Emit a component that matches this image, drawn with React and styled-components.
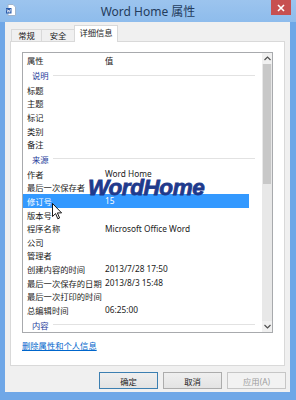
import React from "react";
import styled, { createGlobalStyle } from "styled-components";

const GlobalStyle = createGlobalStyle`
  html, body {
    margin: 0;
    padding: 0;
  }
  body {
    width: 296px;
    height: 400px;
    overflow: hidden;
    font-family: "Noto Sans", "Noto Sans CJK SC", sans-serif;
    color: #1b1b1b;
  }
`;

const rows = [
  { group: "说明" },
  { name: "标题" },
  { name: "主题" },
  { name: "标记" },
  { name: "类别" },
  { name: "备注" },
  { group: "来源" },
  { name: "作者", value: "Word Home" },
  { name: "最后一次保存者" },
  { name: "修订号", value: "15", selected: true },
  { name: "版本号" },
  { name: "程序名称", value: "Microsoft Office Word" },
  { name: "公司" },
  { name: "管理者" },
  { name: "创建内容的时间", value: "2013/7/28 17:50" },
  { name: "最后一次保存的日期", value: "2013/8/3 15:48" },
  { name: "最后一次打印的时间" },
  { name: "总编辑时间", value: "06:25:00" },
  { group: "内容" },
];

const tabs = [
  { label: "常规", width: 31 },
  { label: "安全", width: 34 },
  { label: "详细信息", width: 44, active: true },
];

const App = () => {
  return (
    <>
      <GlobalStyle />
      <Frame>
        <TitleBar>
          <TitleIcon width="10" height="12" viewBox="0 0 10 12">
            <path d="M2 0.5 H7 L9.5 3 V11.5 H2 Z" fill="#fff" stroke="#9fb4cc" />
            <rect x="0" y="4" width="5.5" height="5.5" fill="#2b5cab" />
            <path d="M1 5.2 L1.8 8.4 L2.75 6 L3.7 8.4 L4.5 5.2" fill="none" stroke="#fff" strokeWidth="0.7" />
          </TitleIcon>
          <Title>Word Home 属性</Title>
          <CloseButton>
            <svg width="8" height="8" viewBox="0 0 8 8">
              <path d="M1 1 L7 7 M7 1 L1 7" stroke="#fff" strokeWidth="1.6" />
            </svg>
          </CloseButton>
        </TitleBar>

        <Client>
          <TabStrip>
            {tabs.map((t) => (
              <Tab key={t.label} $active={t.active} $width={t.width}>
                {t.label}
              </Tab>
            ))}
          </TabStrip>

          <Panel>
            <ListBox>
              <ListContent>
                <HeaderRow>
                  <NameCell>属性</NameCell>
                  <ValueCell>值</ValueCell>
                </HeaderRow>
                {rows.map((r, i) =>
                  r.group ? (
                    <GroupRow key={i}>
                      <GroupLabel>{r.group}</GroupLabel>
                      <GroupLine />
                    </GroupRow>
                  ) : (
                    <Row key={i} $selected={r.selected}>
                      <NameCell>{r.name}</NameCell>
                      <ValueCell>{r.value || ""}</ValueCell>
                    </Row>
                  ),
                )}
              </ListContent>
              <ScrollBar>
                <ScrollArrow>
                  <svg width="7" height="5" viewBox="0 0 7 5">
                    <path d="M0.5 4 L3.5 1 L6.5 4" fill="none" stroke="#505050" strokeWidth="1.2" />
                  </svg>
                </ScrollArrow>
                <ScrollTrack>
                  <ScrollThumb />
                </ScrollTrack>
                <ScrollArrow>
                  <svg width="7" height="5" viewBox="0 0 7 5">
                    <path d="M0.5 1 L3.5 4 L6.5 1" fill="none" stroke="#505050" strokeWidth="1.2" />
                  </svg>
                </ScrollArrow>
              </ScrollBar>
            </ListBox>
            <RemoveLink>删除属性和个人信息</RemoveLink>
          </Panel>

          <ButtonRow>
            <DialogButton $default>确定</DialogButton>
            <DialogButton>取消</DialogButton>
            <DialogButton disabled>应用(A)</DialogButton>
          </ButtonRow>
        </Client>

        <Watermark>WordHome</Watermark>
        <Cursor width="11" height="17" viewBox="0 0 11 17">
          <path
            d="M0.5 0.5 L0.5 13.5 L3.6 10.6 L5.8 15.8 L7.6 15 L5.4 9.9 L9.6 9.9 Z"
            fill="#fff"
            stroke="#000"
            strokeWidth="0.9"
            strokeLinejoin="round"
          />
        </Cursor>
      </Frame>
    </>
  );
};

const Frame = styled.div`
  position: relative;
  width: 296px;
  height: 400px;
  box-sizing: border-box;
  background: #6fa7e7;
  display: flex;
  flex-direction: column;
  padding-bottom: 8px;
`;

const TitleBar = styled.div`
  height: 22px;
  display: grid;
  grid-template-columns: 25px 1fr 25px;
  align-items: center;
  background: linear-gradient(#9cc4ee, #8ebcec);
`;

const TitleIcon = styled.svg`
  margin-left: 6px;
  margin-top: -2px;
`;

const Title = styled.div`
  text-align: center;
  font-size: 12px;
  color: #243c5c;
  margin-top: -1px;
`;

const CloseButton = styled.div`
  align-self: start;
  width: 20px;
  height: 15px;
  background: #c75050;
  display: flex;
  align-items: center;
  justify-content: center;
`;

const Client = styled.div`
  flex: 1;
  margin: 0 6px 0 5px;
  background: #f0f0f0;
  display: flex;
  flex-direction: column;
  padding: 3px 5px 0 5px;
`;

const TabStrip = styled.div`
  display: flex;
  align-items: flex-end;
  height: 17px;
  padding-left: 2px;
  margin-bottom: -1px;
  position: relative;
  z-index: 1;
`;

const Tab = styled.div`
  box-sizing: border-box;
  width: ${(p) => p.$width}px;
  height: ${(p) => (p.$active ? 17 : 13)}px;
  margin-left: -1px;
  border: 1px solid #d9d9d9;
  border-bottom: ${(p) => (p.$active ? "none" : "1px solid #d9d9d9")};
  background: ${(p) => (p.$active ? "#fff" : "#f0f0f0")};
  font-size: 8.3px;
  line-height: ${(p) => (p.$active ? 14 : 11)}px;
  text-align: center;
  color: #1b1b1b;
`;

const Panel = styled.div`
  height: 325px;
  box-sizing: border-box;
  background: #fff;
  border: 1px solid #d9d9d9;
  padding: 10px 11px 0 11px;
  display: flex;
  flex-direction: column;
`;

const ListBox = styled.div`
  height: 281px;
  box-sizing: border-box;
  border: 1px solid #a8aaad;
  display: flex;
  overflow: hidden;
`;

const ListContent = styled.div`
  flex: 1;
  overflow: hidden;
  font-size: 8.3px;
`;

const HeaderRow = styled.div`
  display: flex;
  align-items: center;
  height: 14px;
`;

const Row = styled.div`
  display: flex;
  align-items: center;
  height: 13.6px;
  width: 226px;
  background: ${(p) => (p.$selected ? "#3399ff" : "transparent")};
  color: ${(p) => (p.$selected ? "#fff" : "#1b1b1b")};
`;

const NameCell = styled.div`
  width: 78px;
  padding-left: 4px;
  white-space: nowrap;
  overflow: hidden;
`;

const ValueCell = styled.div`
  flex: 1;
  white-space: nowrap;
`;

const GroupRow = styled.div`
  display: flex;
  align-items: center;
  height: 16px;
  padding-left: 9px;
  width: 223px;
`;

const GroupLabel = styled.span`
  color: #1e3c9a;
`;

const GroupLine = styled.div`
  flex: 1;
  height: 1px;
  margin-left: 4px;
  background: #e2e2e2;
`;

const ScrollBar = styled.div`
  width: 10px;
  display: flex;
  flex-direction: column;
  background: #f0f0f0;
`;

const ScrollArrow = styled.div`
  height: 11px;
  display: flex;
  align-items: center;
  justify-content: center;
`;

const ScrollTrack = styled.div`
  flex: 1;
  background: #e8e8e8;
`;

const ScrollThumb = styled.div`
  height: 120px;
  margin: 0 1px;
  background: #c8c8c8;
`;

const RemoveLink = styled.a`
  margin-top: 7px;
  font-size: 8.3px;
  line-height: 12px;
  color: #0066cc;
  text-decoration: underline;
  align-self: flex-start;
  cursor: pointer;
`;

const ButtonRow = styled.div`
  display: flex;
  justify-content: flex-end;
  gap: 5px;
  margin-top: 6px;
  margin-right: -1px;
`;

const DialogButton = styled.button`
  width: 59px;
  height: 17px;
  box-sizing: border-box;
  padding: 0;
  font-family: inherit;
  font-size: 8.3px;
  border: 1px solid ${(p) => (p.$default ? "#3c7fb1" : "#acacac")};
  background: linear-gradient(#efefef, #e3e3e3);
  color: #1b1b1b;

  &:disabled {
    color: #9d9d9d;
    border-color: #c6c6c6;
    background: #f2f2f2;
  }
`;

const Watermark = styled.div`
  position: absolute;
  left: 88px;
  top: 177px;
  font-family: "Liberation Sans", Arial, sans-serif;
  font-size: 22.5px;
  line-height: 1;
  font-weight: 700;
  font-style: italic;
  color: #1f3a8c;
  letter-spacing: -0.4px;
  -webkit-text-stroke: 0.8px #1f3a8c;
  pointer-events: none;
`;

const Cursor = styled.svg`
  position: absolute;
  left: 52px;
  top: 203px;
`;

export default App;
